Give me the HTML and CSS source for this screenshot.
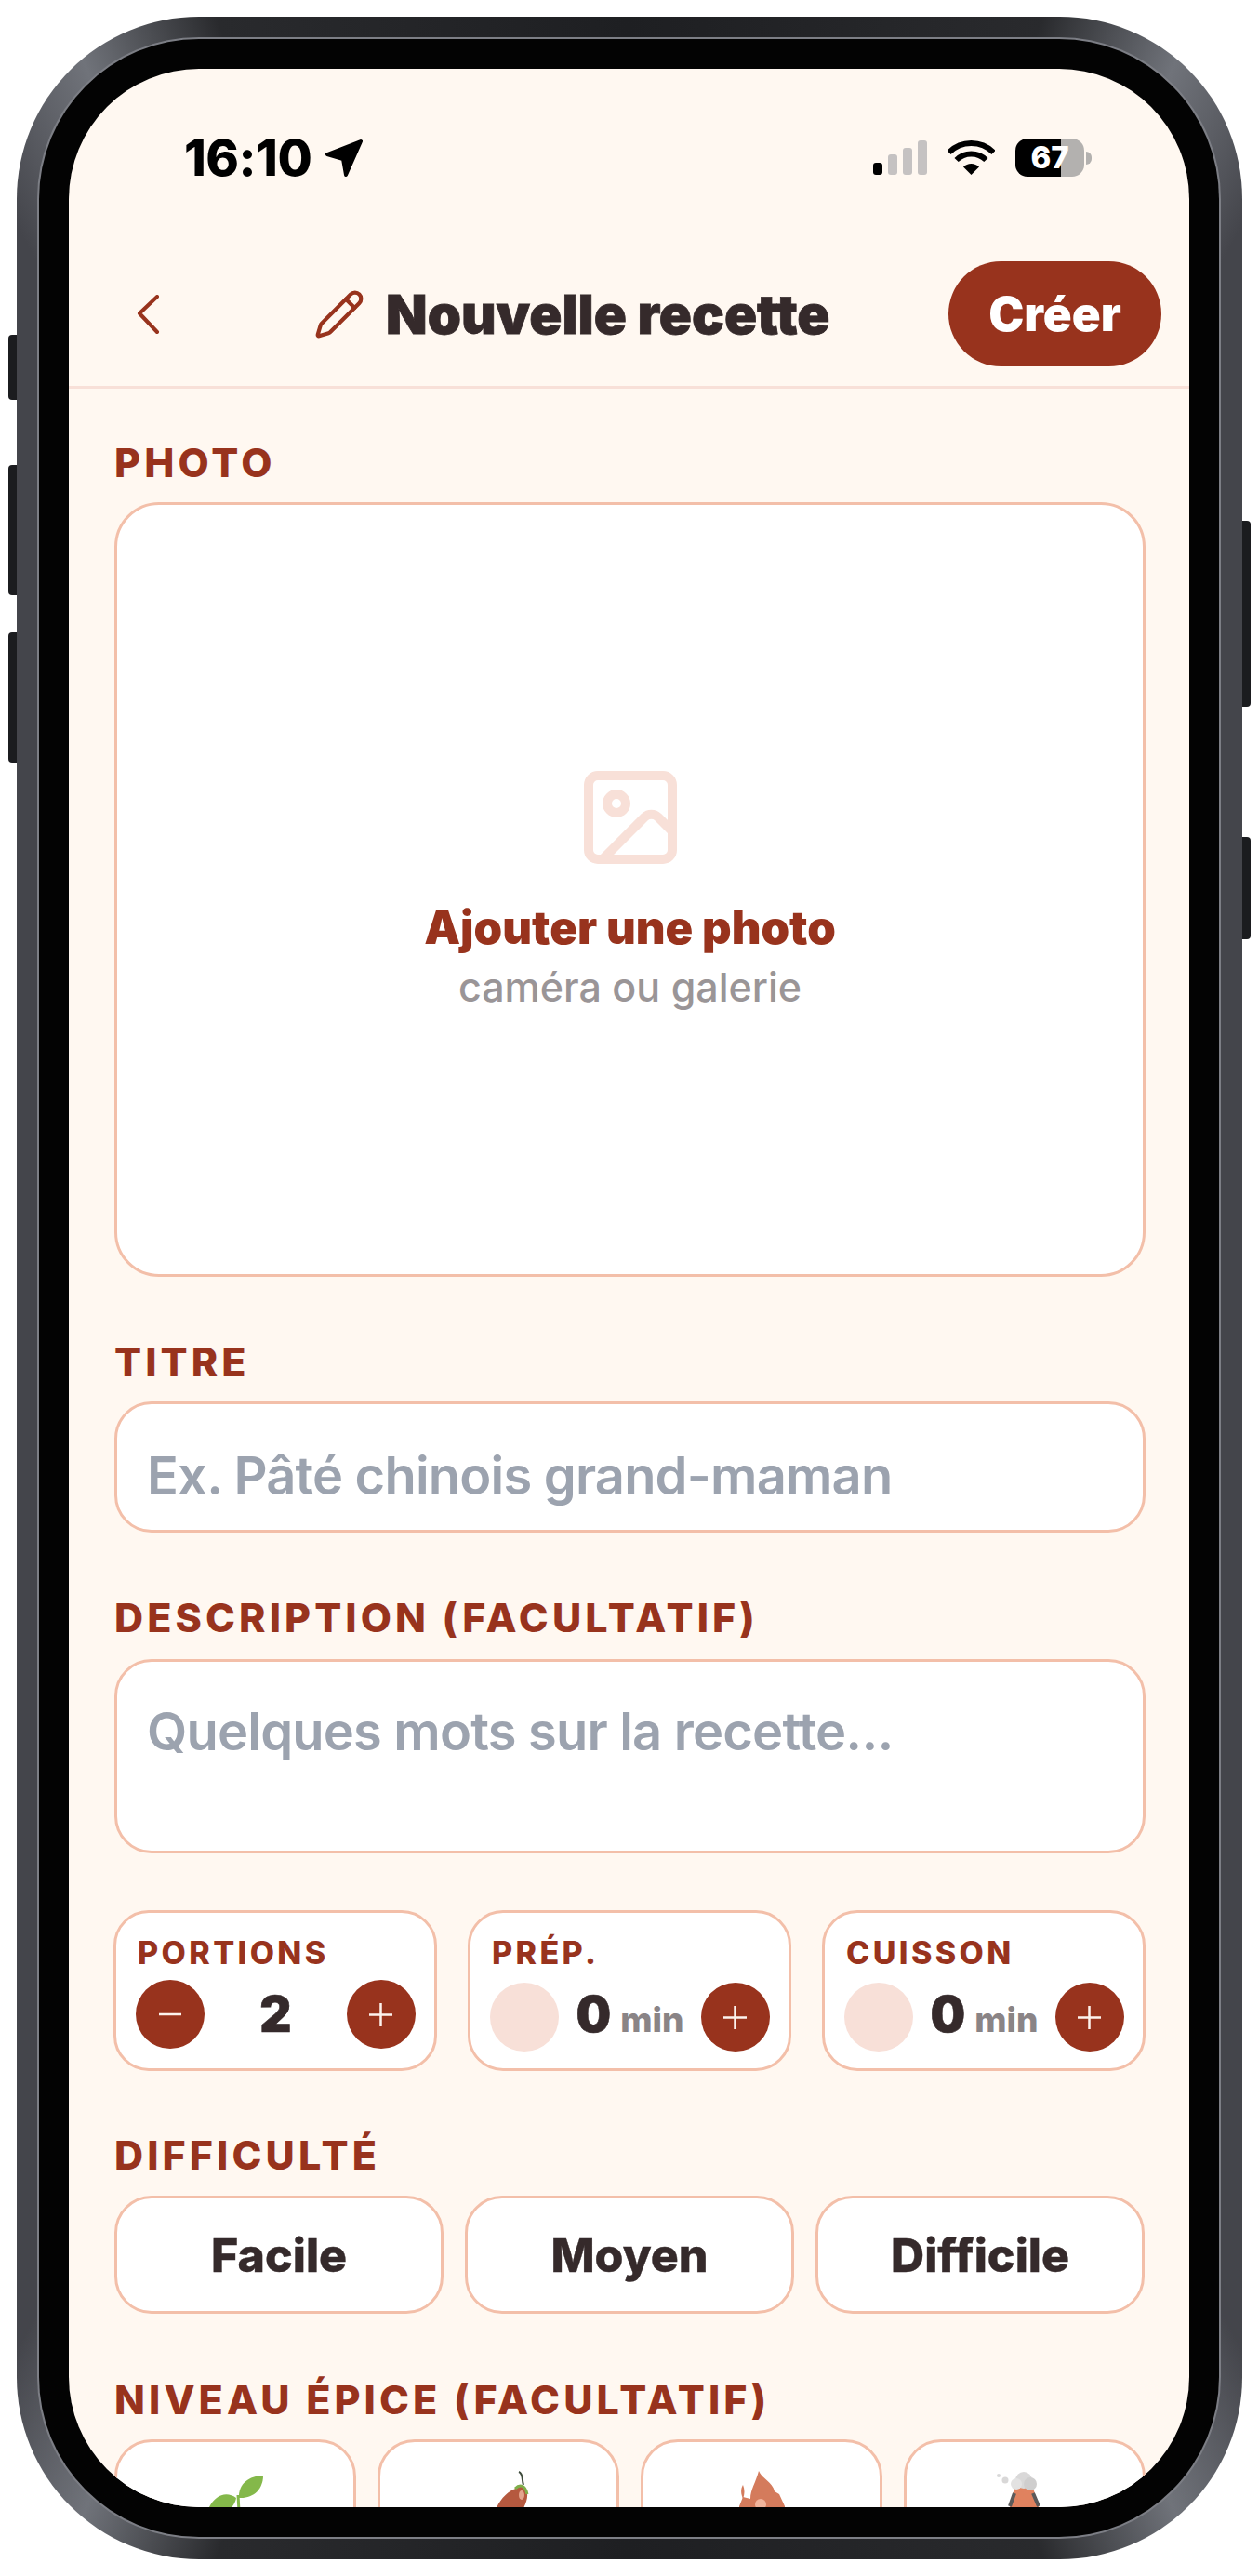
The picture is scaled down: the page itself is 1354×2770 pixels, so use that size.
FILE: index.html
```html
<!DOCTYPE html>
<html lang="fr">
<head>
    <meta charset="UTF-8">
    <meta name="viewport" content="width=device-width, initial-scale=1.0">
    <title>Nouvelle recette</title>
    <link rel="stylesheet" href="styles.css">
</head>
<body>
    <div class="phone">
        <span class="side-btn left btn-a"></span>
        <span class="side-btn left btn-b"></span>
        <span class="side-btn left btn-c"></span>
        <span class="side-btn right btn-d"></span>
        <span class="side-btn right btn-e"></span>

        <div class="bezel">
            <div class="screen">
                <div class="statusbar">
                    <span class="time">16:10</span>
                    <svg class="loc" width="40" height="41" viewBox="0 0 40 41"><polygon points="38,3 2,17 19,22 22,39" fill="#000" stroke="#000" stroke-width="4" stroke-linejoin="round"/></svg>
                    <div class="signal">
                        <span class="bar s1 on"></span>
                        <span class="bar s2"></span>
                        <span class="bar s3"></span>
                        <span class="bar s4"></span>
                    </div>
                    <svg class="wifi" width="51" height="37" viewBox="0 0 51 37" fill="none" stroke="#000" stroke-width="6">
                        <path d="M1.5 13 A34 34 0 0 1 49.5 13"/>
                        <path d="M9.6 21 A22.5 22.5 0 0 1 41.4 21"/>
                        <path d="M25.5 37 L17 28.5 A12 12 0 0 1 34 28.5 Z" fill="#000" stroke="none"/>
                    </svg>
                    <div class="battery"><span>67</span></div>
                    <span class="nub"></span>
                </div>

                <header class="topbar">
                    <svg class="back" width="25" height="42" viewBox="0 0 25 42" fill="none" stroke="#98331d" stroke-width="4" stroke-linecap="round" stroke-linejoin="round"><polyline points="22,2 3,20 22,40"/></svg>
                    <div class="title">
                        <svg width="56" height="56" viewBox="0 0 24 24" fill="none" stroke="#98331d" stroke-width="1.8" stroke-linecap="round" stroke-linejoin="round"><path d="M21.174 6.812a1 1 0 0 0-3.986-3.987L3.842 16.174a2 2 0 0 0-.5.83l-1.321 4.352a.5.5 0 0 0 .623.622l4.353-1.32a2 2 0 0 0 .83-.497z"/><path d="m15 5 4 4"/></svg>
                        <h1>Nouvelle recette</h1>
                    </div>
                    <button class="create">Créer</button>
                </header>

                <form class="form">
                    <section class="field">
                        <label class="lbl">PHOTO</label>
                        <div class="photo">
                            <svg width="120" height="120" viewBox="0 0 24 24" fill="none" stroke="#f8e0d8" stroke-width="2" stroke-linecap="round" stroke-linejoin="round"><rect x="3" y="3" width="18" height="18" rx="2"/><circle cx="9" cy="9" r="2"/><path d="m21 15-3.086-3.086a2 2 0 0 0-2.828 0L6 21"/></svg>
                            <strong>Ajouter une photo</strong>
                            <small>caméra ou galerie</small>
                        </div>
                    </section>

                    <section class="field">
                        <label class="lbl" for="titre">TITRE</label>
                        <input class="txt" id="titre" type="text" placeholder="Ex. Pâté chinois grand-maman">
                    </section>

                    <section class="field desc">
                        <label class="lbl" for="description">DESCRIPTION (FACULTATIF)</label>
                        <textarea class="txt area" id="description" placeholder="Quelques mots sur la recette..."></textarea>
                    </section>

                    <section class="steppers">
                        <div class="stepper">
                            <div class="step-lbl">PORTIONS</div>
                            <div class="step-row">
                                <span class="circle"><svg width="24" height="4" viewBox="0 0 24 4"><path d="M0 2h24" stroke="#fdf3ee" stroke-width="2.5"/></svg></span>
                                <span class="val">2</span>
                                <span class="circle"><svg width="25" height="25" viewBox="0 0 25 25"><path d="M0 12.5h25M12.5 0v25" stroke="#fdf3ee" stroke-width="2.5"/></svg></span>
                            </div>
                        </div>
                        <div class="stepper">
                            <div class="step-lbl">PRÉP.</div>
                            <div class="step-row">
                                <span class="circle off"></span>
                                <span class="val">0<em>min</em></span>
                                <span class="circle"><svg width="25" height="25" viewBox="0 0 25 25"><path d="M0 12.5h25M12.5 0v25" stroke="#fdf3ee" stroke-width="2.5"/></svg></span>
                            </div>
                        </div>
                        <div class="stepper">
                            <div class="step-lbl">CUISSON</div>
                            <div class="step-row">
                                <span class="circle off"></span>
                                <span class="val">0<em>min</em></span>
                                <span class="circle"><svg width="25" height="25" viewBox="0 0 25 25"><path d="M0 12.5h25M12.5 0v25" stroke="#fdf3ee" stroke-width="2.5"/></svg></span>
                            </div>
                        </div>
                    </section>

                    <section class="field diff">
                        <label class="lbl">DIFFICULTÉ</label>
                        <div class="choices">
                            <button type="button" class="choice">Facile</button>
                            <button type="button" class="choice">Moyen</button>
                            <button type="button" class="choice">Difficile</button>
                        </div>
                    </section>

                    <section class="field">
                        <label class="lbl">NIVEAU ÉPICE (FACULTATIF)</label>
                        <div class="spices">
                            <div class="spice">
                                <svg width="70" height="60" viewBox="0 0 70 60">
                                    <path d="M39 29 C38 14 50 5 65 5 C65 20 54 30 39 29Z" fill="#84b84a"/>
                                    <path d="M36 29 C24 20 10 28 5 44 C20 48 34 42 36 29Z" fill="#84b84a"/>
                                    <path d="M38 26 L40 60" stroke="#84b84a" stroke-width="3" fill="none"/>
                                </svg>
                            </div>
                            <div class="spice">
                                <svg width="70" height="60" viewBox="0 0 70 60">
                                    <path d="M56 18 C60 14 66 17 66 24 C67 32 62 40 58 48 L30 48 C33 36 42 22 56 18Z" fill="#b5593f"/>
                                    <ellipse cx="60" cy="26" rx="3" ry="5" fill="#e3a58e"/>
                                    <path d="M53 19 C58 14 64 15 66 25" stroke="#7fae4a" stroke-width="3" fill="none"/>
                                    <path d="M62 15 C60 10 62 3 57 1" stroke="#3d4a3a" stroke-width="2" fill="none"/>
                                </svg>
                            </div>
                            <div class="spice">
                                <svg width="70" height="60" viewBox="0 0 70 60">
                                    <path d="M32 0 C35 8 47 12 49 22 L54 25 L60 38 L60 60 L11 60 L11 38 L15 28 L23 30 C23 20 29 12 32 0Z" fill="#d47b5c"/>
                                    <path d="M15 15 C12 20 13 25 15 30 C17 25 17 20 15 15Z" fill="#d47b5c"/>
                                    <ellipse cx="34" cy="36" rx="6" ry="6" fill="#f0b49c"/>
                                </svg>
                            </div>
                            <div class="spice">
                                <svg width="70" height="60" viewBox="0 0 70 60">
                                    <polygon points="24,18 44,18 50,38 53,60 16,60 19,38" fill="#e0825f"/>
                                    <path d="M24 24 L19 38 M44 24 L50 38" stroke="#5c5a5a" stroke-width="4" fill="none"/>
                                    <circle cx="34" cy="10" r="9" fill="#d9d8d8"/>
                                    <circle cx="41" cy="14" r="7" fill="#cfcece"/>
                                    <circle cx="26" cy="14" r="6" fill="#e3e2e2"/>
                                    <circle cx="14" cy="10" r="3.5" fill="#d9d8d8"/>
                                    <circle cx="7" cy="5" r="2" fill="#d9d8d8"/>
                                </svg>
                            </div>
                        </div>
                    </section>
                </form>
            </div>
        </div>
    </div>
</body>
</html>
```

FILE: styles.css
```css
* {
    box-sizing: border-box;
}
body {
    margin: 0;
    padding: 18px;
    width: 1354px;
    height: 2770px;
    overflow: hidden;
    background: #fff;
    font-family: Inter, "Noto Sans", sans-serif;
}
.phone {
    position: relative;
    width: 1318px;
    height: 2734px;
    padding: 24px 25px 24px 24px;
    border-radius: 196px;
    background: conic-gradient(#1e1f22 0deg, #292a2d 18deg, #70737a 24deg, #44454b 30deg, #44454b 150deg, #70737a 156deg, #292a2d 162deg, #1e1f22 180deg, #292a2d 198deg, #70737a 204deg, #44454b 210deg, #44454b 330deg, #70737a 336deg, #292a2d 342deg, #1e1f22 360deg);
}
.side-btn {
    position: absolute;
    width: 9px;
    background: #1b1c1f;
}
.side-btn.left {
    left: -9px;
    border-radius: 4px 0 0 4px;
}
.side-btn.right {
    right: -9px;
    border-radius: 0 4px 4px 0;
}
.btn-a { top: 342px; height: 70px; }
.btn-b { top: 482px; height: 140px; }
.btn-c { top: 662px; height: 140px; }
.btn-d { top: 542px; height: 200px; }
.btn-e { top: 882px; height: 110px; }

.bezel {
    width: 1269px;
    height: 2686px;
    padding: 32px;
    border-radius: 172px;
    background: #030303;
    box-shadow: 0 0 0 2px #7c7e85;
}
.screen {
    width: 1205px;
    height: 2622px;
    overflow: hidden;
    border-radius: 140px;
    background: #fff8f1;
}

/* status bar */
.statusbar {
    display: flex;
    align-items: center;
    height: 207px;
    padding: 0 105px 16px 124px;
    color: #000;
}
.time {
    font-size: 54px;
    font-weight: 800;
    letter-spacing: -0.5px;
}
.loc {
    margin-left: 15px;
}
.signal {
    display: flex;
    align-items: flex-end;
    gap: 6px;
    height: 37px;
    margin-left: auto;
}
.bar {
    width: 10px;
    border-radius: 3px;
    background: #c5c2c2;
}
.bar.on { background: #000; }
.s1 { height: 13px; }
.s2 { height: 22px; }
.s3 { height: 29px; }
.s4 { height: 37px; }
.wifi {
    margin-left: 22px;
}
.battery {
    width: 74px;
    height: 41px;
    margin-left: 22px;
    border-radius: 13px;
    background: linear-gradient(90deg, #000 66%, #b3b1af 66%);
    color: #fff;
    font-size: 33px;
    font-weight: 800;
    line-height: 41px;
    text-align: center;
}
.nub {
    width: 6px;
    height: 14px;
    margin-left: 2px;
    border-radius: 0 6px 6px 0;
    background: #b3b1af;
}

/* header */
.topbar {
    display: flex;
    align-items: center;
    padding: 0 30px 21px 73px;
    border-bottom: 3px solid #f8e0d8;
}
.title {
    display: flex;
    align-items: center;
    gap: 22px;
    margin-left: 165px;
}
.title h1 {
    margin: 0;
    color: #352a2b;
    font-size: 58px;
    font-weight: 900;
    -webkit-text-stroke: 0.8px #352a2b;
}
.create {
    width: 229px;
    height: 113px;
    margin-left: auto;
    border: none;
    border-radius: 57px;
    background: #98331d;
    color: #fff;
    font-family: inherit;
    font-size: 51px;
    font-weight: 900;
}

/* form */
.form {
    padding: 54px 47px 0 49px;
}
.field {
    margin-bottom: 66px;
}
.lbl {
    display: block;
    margin-bottom: 18px;
    color: #98331d;
    font-size: 43px;
    font-weight: 800;
    line-height: 50px;
    letter-spacing: 4.1px;
}
.photo {
    display: flex;
    flex-direction: column;
    align-items: center;
    justify-content: center;
    height: 833px;
    padding-bottom: 7px;
    border: 3px solid #f3bfa9;
    border-radius: 48px;
    background: #fff;
}
.photo strong {
    margin-top: 29px;
    color: #98331d;
    font-size: 49px;
    font-weight: 900;
}
.photo small {
    margin-top: 8px;
    color: #9a9597;
    font-size: 43px;
    font-weight: 500;
}
.txt {
    display: block;
    width: 100%;
    height: 141px;
    padding: 18px 32px 0;
    border: 3px solid #f3bfa9;
    border-radius: 40px;
    background: #fff;
    font-family: inherit;
    font-size: 56px;
    font-weight: 600;
    letter-spacing: -0.8px;
    resize: none;
    outline: none;
}
.txt::placeholder {
    color: #9ca3af;
    opacity: 1;
}
.area {
    height: 209px;
    padding-top: 42px;
    line-height: 66px;
}
.desc {
    margin-bottom: 61px;
}
.desc .lbl {
    margin-bottom: 20px;
}

/* steppers */
.steppers {
    display: flex;
    gap: 33px;
    margin: 0 0 65px -1px;
}
.stepper {
    width: 348px;
    height: 173px;
    padding: 23px 20px 0 21px;
    border: 3px solid #f3bfa9;
    border-radius: 38px;
    background: #fff;
}
.step-lbl {
    padding-left: 2px;
    color: #98331d;
    font-size: 34px;
    font-weight: 800;
    line-height: 40px;
    letter-spacing: 3.4px;
}
.step-row {
    display: flex;
    align-items: center;
    justify-content: space-between;
    margin-top: 9px;
}
.circle {
    display: flex;
    align-items: center;
    justify-content: center;
    flex: none;
    width: 74px;
    height: 74px;
    border-radius: 50%;
    background: #98331d;
}
.circle.off {
    background: #f8e0d8;
}
.val {
    color: #352a2b;
    font-size: 53px;
    font-weight: 900;
    line-height: 74px;
    -webkit-text-stroke: 0.6px #352a2b;
}
.val em {
    margin-left: 10px;
    color: #8a8486;
    font-size: 37px;
    font-style: normal;
    font-weight: 800;
    -webkit-text-stroke: 0;
}

/* difficulty */
.diff {
    margin-bottom: 67px;
}
.diff .lbl {
    margin-bottom: 19px;
}
.choices {
    display: flex;
    gap: 23px;
}
.choice {
    width: 354px;
    height: 127px;
    border: 3px solid #f3bfa9;
    border-radius: 40px;
    background: #fff;
    color: #352a2b;
    font-family: inherit;
    font-size: 50px;
    font-weight: 800;
    -webkit-text-stroke: 0.4px #352a2b;
}

/* spice level */
.spices {
    display: flex;
    gap: 23px;
}
.spice {
    flex: 1;
    display: flex;
    justify-content: center;
    height: 200px;
    padding-top: 31px;
    border: 3px solid #f3bfa9;
    border-radius: 40px;
    background: #fff;
}
```
